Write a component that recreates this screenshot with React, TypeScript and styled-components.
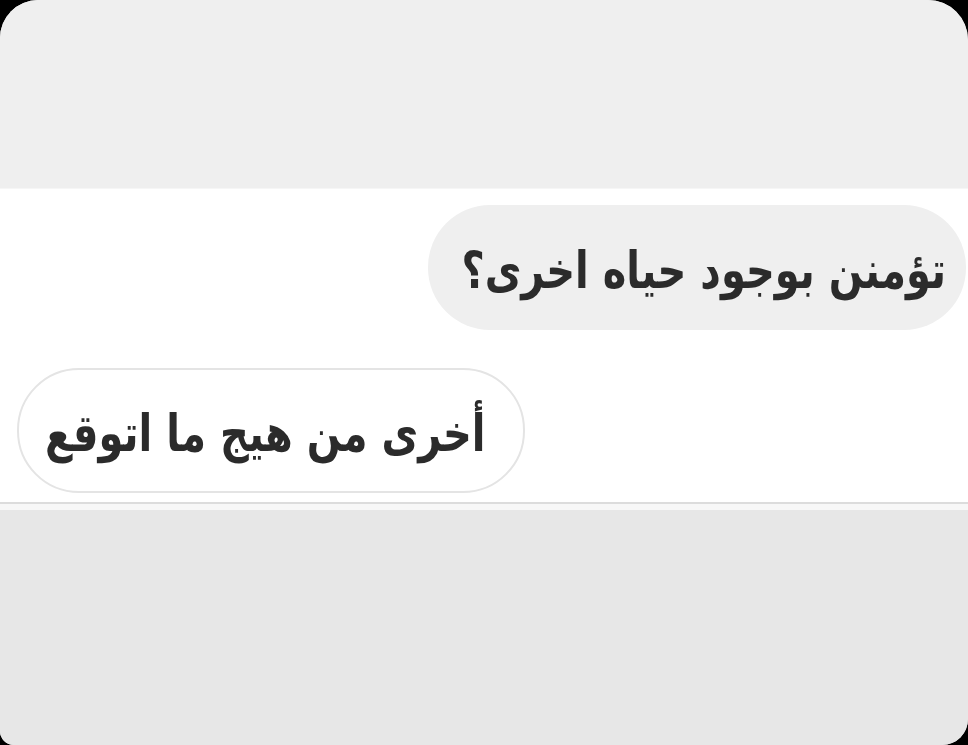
import styled, { createGlobalStyle } from "styled-components";

const GlobalStyle = createGlobalStyle`
  html, body {
    margin: 0;
    padding: 0;
    background: #000;
  }
  body {
    font-family: "DejaVu Sans", "Liberation Sans", sans-serif;
  }
`;

const Screen = styled.div`
  width: 968px;
  height: 745px;
  display: flex;
  flex-direction: column;
  overflow: hidden;
  background: #e7e7e7;
  border-radius: 38px 40px 26px 14px;
`;

const TopArea = styled.div`
  height: 188px;
  background: #efefef;
  border-bottom: 1px solid #f6f6f6;
`;

const Thread = styled.div`
  height: 313px;
  background: #fff;
  display: flex;
  flex-direction: column;
  padding-top: 16px;
  gap: 38px;
  box-sizing: border-box;
`;

const Row = styled.div<{ $side: "left" | "right" }>`
  display: flex;
  justify-content: ${({ $side }) => ($side === "right" ? "flex-end" : "flex-start")};
  padding: ${({ $side }) => ($side === "right" ? "0 2px 0 0" : "0 0 0 17px")};
`;

const Bubble = styled.div<{ $outlined?: boolean }>`
  direction: rtl;
  height: 125px;
  box-sizing: border-box;
  display: flex;
  align-items: center;
  padding: ${({ $outlined }) => ($outlined ? "6px 37px 0 26px" : "6px 20px 0 33px")};
  border-radius: 62px;
  background: ${({ $outlined }) => ($outlined ? "#fff" : "#efefef")};
  border: ${({ $outlined }) => ($outlined ? "2px solid #e4e4e4" : "none")};
  filter: blur(0.7px);
`;

const Text = styled.span`
  display: inline-block;
  color: #2b2b2b;
  font-size: 40px;
  font-weight: bold;
  line-height: 1;
  white-space: nowrap;
  transform: scaleY(1.28);
  transform-origin: 50% 60%;
`;

const Divider = styled.div`
  height: 2px;
  background: #dcdcdc;
`;

const Gap = styled.div`
  height: 6px;
  background: #f7f7f7;
`;

const BottomArea = styled.div`
  flex: 1;
  background: #e7e7e7;
`;

export default function App() {
  return (
    <>
      <GlobalStyle />
      <Screen>
        <TopArea />
        <Thread>
          <Row $side="right">
            <Bubble>
              <Text>تؤمنن بوجود حياه اخرى؟</Text>
            </Bubble>
          </Row>
          <Row $side="left">
            <Bubble $outlined>
              <Text>أخرى من هيج ما اتوقع</Text>
            </Bubble>
          </Row>
        </Thread>
        <Divider />
        <Gap />
        <BottomArea />
      </Screen>
    </>
  );
}
